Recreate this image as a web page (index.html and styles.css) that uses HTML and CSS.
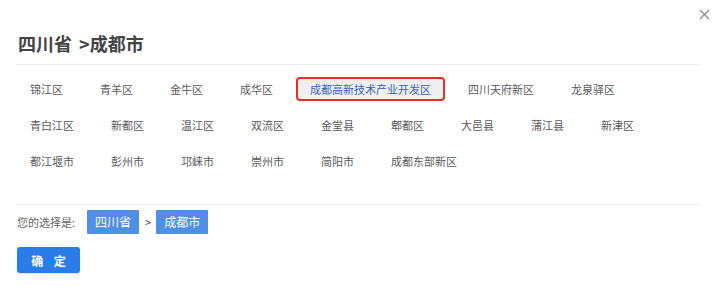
FILE: index.html
```html
<!DOCTYPE html>
<html lang="zh-CN">
<head>
  <meta charset="utf-8" />
  <meta name="viewport" content="width=device-width,initial-scale=1" />
  <title>选择地区</title>
  <link rel="stylesheet" href="styles.css">
</head>
<body>
  <div class="dialog">
    <a class="close" href="#" title="关闭">
      <svg width="11" height="11" viewBox="0 0 11 11"><path d="M1 1L10 10M10 1L1 10" stroke="#8a8a8a" stroke-width="1.2" fill="none"/></svg>
    </a>

    <h2 class="title">四川省 &gt;成都市</h2>

    <ul class="areas">
      <li>锦江区</li>
      <li>青羊区</li>
      <li>金牛区</li>
      <li>成华区</li>
      <li class="on">成都高新技术产业开发区</li>
      <li>四川天府新区</li>
      <li>龙泉驿区</li>
      <li>青白江区</li>
      <li>新都区</li>
      <li>温江区</li>
      <li>双流区</li>
      <li>金堂县</li>
      <li>郫都区</li>
      <li>大邑县</li>
      <li>蒲江县</li>
      <li>新津区</li>
      <li>都江堰市</li>
      <li>彭州市</li>
      <li>邛崃市</li>
      <li>崇州市</li>
      <li>简阳市</li>
      <li>成都东部新区</li>
    </ul>

    <div class="picked">
      <span class="lbl">您的选择是:</span>
      <span class="tag">四川省</span>
      <span class="sep">&gt;</span>
      <span class="tag">成都市</span>
    </div>

    <button class="ok" type="button">确 定</button>
  </div>
</body>
</html>
```

FILE: styles.css
```css
:root{
  --text:#5a5a5a; --title:#444; --line:#ececec;
  --tag:#4f8fe6; --btn:#2a7de8; --red:#e5302a; --blue:#3563c4;
}
*{box-sizing:border-box;margin:0;padding:0}
body{background:#fff;font-family:"Noto Sans CJK SC","Microsoft YaHei",sans-serif;font-size:11px;color:var(--text)}
.dialog{position:relative;width:720px;height:296px;padding:30px 20px 0 16px}
.close{position:absolute;top:9px;right:10px;display:block;width:11px;height:11px;line-height:0}

.title{font-size:18px;font-weight:700;color:var(--title);line-height:26px;padding:0 0 8px 2px;word-spacing:3px;border-bottom:1px solid var(--line)}

.areas{list-style:none;display:flex;flex-wrap:wrap;column-gap:9px;row-gap:12px;padding:12px 0 31px}
.areas li{height:24px;line-height:20px;padding:0 12px;border:2px solid transparent;border-radius:4px;white-space:nowrap;color:var(--text)}
.areas li.on{background:#efefef;border-color:var(--red);color:var(--blue)}

.picked{display:flex;align-items:center;height:30px;padding-top:5px;border-top:1px solid var(--line);padding-left:1px}
.lbl{color:#666;margin-right:12px}
.tag{display:inline-block;height:24px;line-height:24px;padding:0 8px;background:var(--tag);color:#fff;font-size:12px;border-radius:1px}
.sep{margin:0 5px 0 6px;color:#444;font-size:11px}

.ok{display:block;margin:13px 0 0 1px;width:63px;height:26px;border:none;border-radius:3px;background:var(--btn);color:#fff;font-family:inherit;font-size:12px;font-weight:700;letter-spacing:4px;text-indent:4px;cursor:pointer;box-shadow:0 1px 2px rgba(0,0,0,.15)}
```
